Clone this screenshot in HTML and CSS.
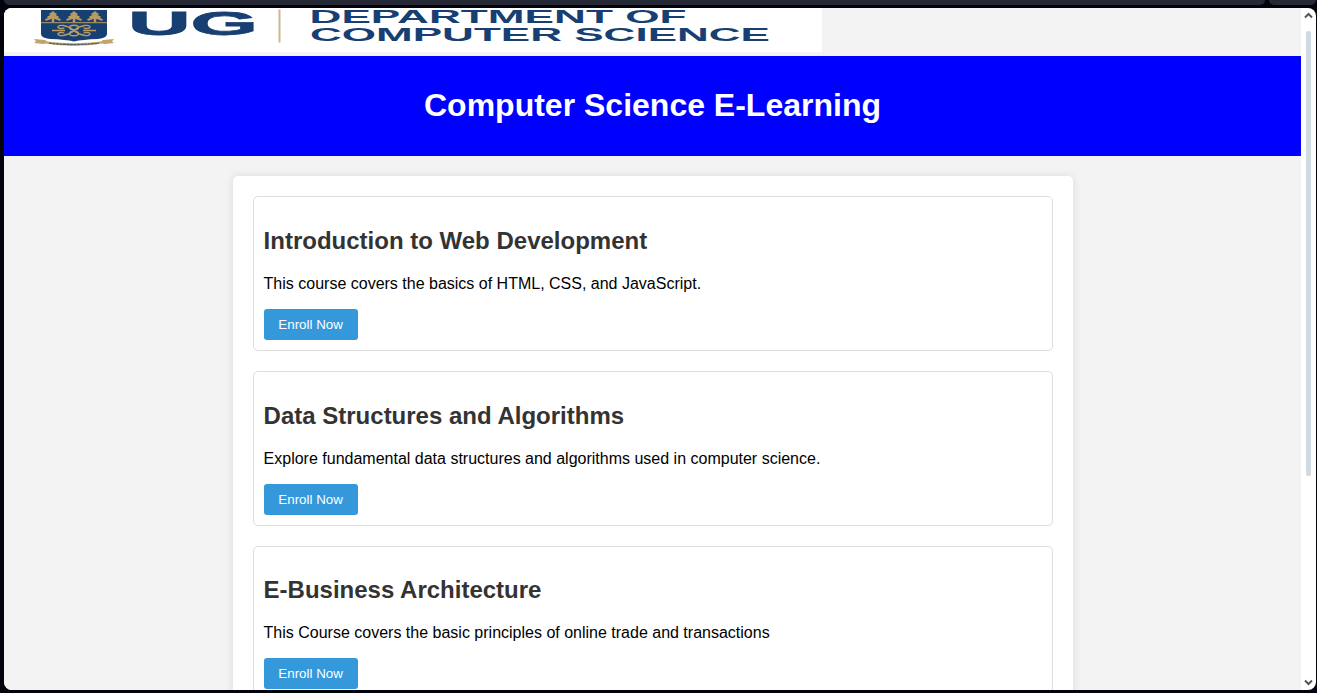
FILE: index.html
```html
<!DOCTYPE html>
<html lang="en">
<head>
<meta charset="utf-8">
<title>Computer Science E-Learning</title>
<link rel="stylesheet" href="styles.css">
</head>
<body>
<div class="tabs"><span class="tab-main"></span><span class="tab-side"></span></div>
<div class="window">
  <div class="page">
    <div class="banner">
      <svg class="logo" width="818" height="44" viewBox="4 8 818 44" role="img" aria-label="UG Department of Computer Science">
        <defs>
          <g id="tree" fill="none" stroke="#b99c63">
            <path stroke-width="2.500" d="M0 11.500V22"/>
            <path stroke-width="1.900" d="M-3.500 14.500L0 12.700L3.500 14.500M-5.500 17.300L0 15L5.500 17.300M-7.500 20L0 17.300L7.500 20"/>
          </g>
        </defs>
        <path fill="#173f72" d="M41 10H107V34Q107 38 98 39Q82 39.500 74 41.500Q66 39.500 50 39Q41 38 41 34Z"/>
        <use href="#tree" x="53"/><use href="#tree" x="74"/><use href="#tree" x="95"/>
        <path stroke="#b99c63" d="M41 22.700H107"/>
        <g fill="none" stroke="#b99c63" stroke-width="1.400">
          <path d="M52 30.500H65M83 30.500H96"/>
          <path d="M74 30.500C67 24.500 58 24.500 58 27C58 29 64 29 64 27.500M74 30.500C81 24.500 90 24.500 90 27C90 29 84 29 84 27.500M74 30.500C67 36.500 58 36.500 58 34C58 32 64 32 64 33.500M74 30.500C81 36.500 90 36.500 90 34C90 32 84 32 84 33.500"/>
          <ellipse cx="74" cy="27.500" rx="4.500" ry="2.200"/><ellipse cx="74" cy="33.500" rx="4.500" ry="2.200"/>
        </g>
        <path fill="#c3a36a" d="M34 39L45 40L47 41.500Q74 45 101 41.500L103 40L114 39L112 41.500L114 43L105 44L102 43.500Q74 48 46 43.500L43 44L34 43L36 41.500Z"/>
        <path fill="none" stroke="#536067" stroke-width="1.200" stroke-dasharray="3 .5" d="M49 43.200Q74 46 99 43.200"/>
        <g class="logo-text">
          <text class="ug" x="128" y="35" textLength="130" lengthAdjust="spacingAndGlyphs">UG</text>
          <text x="309.500" y="23" textLength="377" lengthAdjust="spacingAndGlyphs">DEPARTMENT OF</text>
          <text x="310" y="40.700" textLength="460" lengthAdjust="spacingAndGlyphs">COMPUTER SCIENCE</text>
        </g>
        <path stroke="#cdb88f" stroke-width="2" d="M279.500 9.500V42.500"/>
      </svg>
    </div>
    <header class="header"><h1>Computer Science E-Learning</h1></header>
    <main class="courses">
      <section class="course">
        <h2>Introduction to Web Development</h2>
        <p>This course covers the basics of HTML, CSS, and JavaScript.</p>
        <button class="enroll">Enroll Now</button>
      </section>
      <section class="course">
        <h2>Data Structures and Algorithms</h2>
        <p>Explore fundamental data structures and algorithms used in computer science.</p>
        <button class="enroll">Enroll Now</button>
      </section>
      <section class="course">
        <h2>E-Business Architecture</h2>
        <p>This Course covers the basic principles of online trade and transactions</p>
        <button class="enroll">Enroll Now</button>
      </section>
    </main>
  </div>
  <div class="scrollbar">
    <svg width="9" height="7" viewBox="0 0 9 7"><path d="M1 5.500L4.500 2L8 5.500"/></svg>
    <div class="track"><div class="thumb"></div></div>
    <svg width="9" height="7" viewBox="0 0 9 7"><path d="M1 1.500L4.500 5L8 1.500"/></svg>
  </div>
</div>
</body>
</html>
```
FILE: styles.css
```css
* { box-sizing: border-box; }
html, body { height: 100%; }
body {
  margin: 0;
  overflow: hidden;
  background: #02030c;
  font-family: "Liberation Sans", Arial, sans-serif;
}
.tabs { display: flex; gap: 4px; height: 8px; padding: 0 1px 3px 4px; }
.tab-main { width: 1261px; background: #252936; border-radius: 0 0 5px 5px; }
.tab-side { flex: 1; background: #252936; border-radius: 0 0 5px 5px; }
.window {
  display: flex;
  width: 1312px;
  height: 682px;
  margin-left: 4px;
  border-radius: 8px;
  overflow: hidden;
  background: #fff;
}
.page { width: 1297px; height: 682px; overflow: hidden; background: #f3f3f3; }
.banner { height: 48px; }
.logo { display: block; background: #fff; }
.logo-text { fill: #173f72; font-size: 17.6px; font-weight: bold; }
.ug { font-size: 34px; stroke: #173f72; stroke-width: .8px; }
.header {
  display: flex;
  align-items: center;
  justify-content: center;
  height: 100px;
  padding-bottom: 2px;
  background: #00f;
  color: #fff;
}
.header h1 { margin: 0; font-size: 32px; line-height: 38px; }
.courses {
  width: 840px;
  height: 620px;
  margin: 20px auto 0 229px;
  padding: 20.4px 20px 20px;
  background: #fff;
  border-radius: 5px;
  box-shadow: 0 0 10px rgba(0, 0, 0, .1);
}
.course {
  height: 154.67px;
  margin-bottom: 20px;
  padding: 10px 10px 10px 9.6px;
  border: 1px solid #ddd;
  border-radius: 5px;
}
.course h2 { margin: 19.6px 0 21px; font-size: 24px; line-height: 27px; color: #333; }
.course p { margin: 0 0 15.4px; font-size: 16px; line-height: 18.67px; color: #000; }
.enroll {
  display: block;
  width: 94px;
  height: 31px;
  padding: 0;
  border: 0;
  border-radius: 3px;
  background: #3498db;
  color: #fff;
  font: 13.333px "Liberation Sans", Arial, sans-serif;
}
.scrollbar {
  display: flex;
  flex-direction: column;
  align-items: center;
  width: 15px;
  padding: 4px 0;
}
.scrollbar svg { fill: none; stroke: #555; stroke-width: 2; }
.track { flex: 1; padding-top: 12px; }
.thumb { width: 5px; height: 445px; border-radius: 2px; background: #cfdae2; }
```
